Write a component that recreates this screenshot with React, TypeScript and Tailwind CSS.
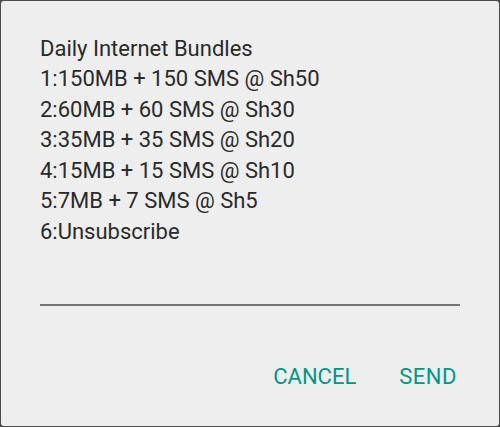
const LINES = [
  "Daily Internet Bundles",
  "1:150MB + 150 SMS @ Sh50",
  "2:60MB + 60 SMS @ Sh30",
  "3:35MB + 35 SMS @ Sh20",
  "4:15MB + 15 SMS @ Sh10",
  "5:7MB + 7 SMS @ Sh5",
  "6:Unsubscribe",
]

export default function App() {
  return (
    <div className="h-[427px] w-[500px] bg-[#4b4b4b] p-px font-['Roboto','Liberation_Sans',sans-serif]">
      <div className="flex h-full flex-col rounded-[3px] bg-[#eeeeee]">
        <div className="pl-[39px] pt-[33px] text-[22px] leading-[30.43px] text-[#2a2a2a]">
          {LINES.map((line) => (
            <div key={line}>{line}</div>
          ))}
        </div>
        <div className="ml-[39px] mt-[57px] h-[2px] w-[420px] bg-[#757575]" />
        <div className="mt-[53px] flex justify-end gap-[43px] pr-[42px] text-[22px] leading-[36px] text-[#009688]">
          <button type="button">CANCEL</button>
          <button type="button" className="tracking-[0.5px]">SEND</button>
        </div>
      </div>
    </div>
  )
}
